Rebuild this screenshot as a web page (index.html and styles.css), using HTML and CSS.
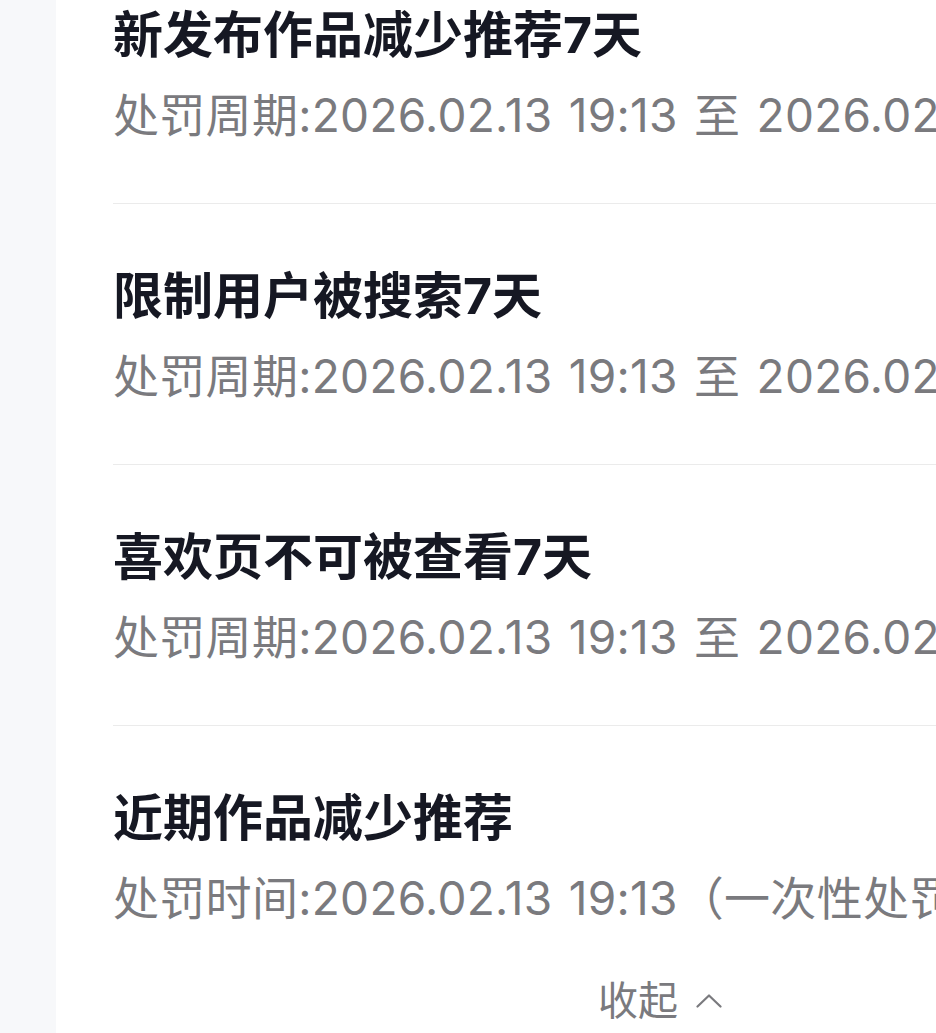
FILE: index.html
```html
<!DOCTYPE html>
<html lang="zh-CN">
<head>
<meta charset="utf-8">
<link rel="stylesheet" href="styles.css">
</head>
<body>
<div class="page">
  <div class="side"></div>
  <div class="card">
    <ul class="list">
      <li class="item">
        <div class="title">新发布作品减少推荐7天</div>
        <div class="sub">处罚周期:2026.02.13 19:13 至 2026.02.20 19:13</div>
      </li>
      <li class="item">
        <div class="title">限制用户被搜索7天</div>
        <div class="sub">处罚周期:2026.02.13 19:13 至 2026.02.20 19:13</div>
      </li>
      <li class="item">
        <div class="title">喜欢页不可被查看7天</div>
        <div class="sub">处罚周期:2026.02.13 19:13 至 2026.02.20 19:13</div>
      </li>
      <li class="item last">
        <div class="title">近期作品减少推荐</div>
        <div class="sub">处罚时间:2026.02.13 19:13（一次性处罚）</div>
      </li>
    </ul>
    <div class="collapse">
      <span class="collapse-text">收起</span>
      <svg class="chev" width="26" height="14" viewBox="0 0 26 14"><path d="M1.5 12.5 L13 1.5 L24.5 12.5" fill="none" stroke="#7a7a7e" stroke-width="2.2" stroke-linecap="round" stroke-linejoin="round"/></svg>
    </div>
  </div>
</div>
</body>
</html>
```
FILE: styles.css
```css
html, body {
  margin: 0;
  padding: 0;
  background: #f7f8fa;
}
body {
  width: 936px;
  height: 1033px;
  overflow: hidden;
  font-family: Inter, "Noto Sans CJK SC", sans-serif;
}
.page {
  display: flex;
  height: 1033px;
}
.side {
  width: 56px;
  flex: none;
  background: #f7f8fa;
}
.card {
  flex: none;
  width: 1094px;
  background: #ffffff;
  padding: 0 57px;
}
.list {
  list-style: none;
  margin: 0;
  padding: 0;
}
.item {
  padding: 57px 0 58px;
  border-bottom: 1px solid #ebebeb;
  white-space: nowrap;
}
.item:first-child {
  padding-top: 0;
}
.item.last {
  border-bottom: none;
  padding-bottom: 0;
}
.title {
  font-size: 50px;
  line-height: 70px;
  font-weight: 700;
  color: #161823;
}
.sub {
  margin-top: 15px;
  font-size: 46px;
  line-height: 60px;
  letter-spacing: 0.3px;
  word-spacing: 3px;
  color: #7a7a7e;
}
.collapse {
  display: flex;
  align-items: center;
  justify-content: center;
  gap: 18px;
  padding-top: 43px;
  height: 60px;
}
.collapse-text {
  font-size: 40px;
  line-height: 60px;
  color: #7a7a7e;
}
.chev {
  display: block;
}
```
